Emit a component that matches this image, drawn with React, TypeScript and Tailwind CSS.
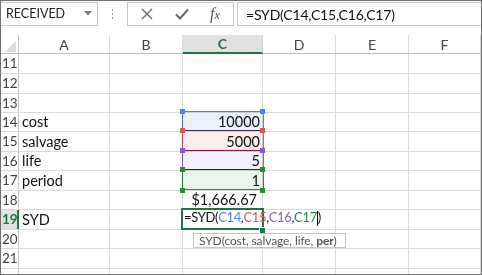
import { Fragment } from "react";

const COLS = [
  { key: "A", w: "w-[91px]" },
  { key: "B", w: "w-[73px]" },
  { key: "C", w: "w-[80px]" },
  { key: "D", w: "w-[73px]" },
  { key: "E", w: "w-[73px]" },
  { key: "F", w: "flex-1" },
];

const ROWS = [
  { n: 11, h: "h-[20px]" },
  { n: 12, h: "h-[20px]" },
  { n: 13, h: "h-[19px]" },
  { n: 14, h: "h-[19px]" },
  { n: 15, h: "h-[20px]" },
  { n: 16, h: "h-[19px]" },
  { n: 17, h: "h-[20px]" },
  { n: 18, h: "h-[19px]" },
  { n: 19, h: "h-[20px]" },
  { n: 20, h: "h-[19px]" },
  { n: 21, h: "h-[20px]" },
  { n: 22, h: "h-[20px]" },
];

const CELLS: Record<number, { A?: string; C?: string }> = {
  14: { A: "cost", C: "10000" },
  15: { A: "salvage", C: "5000" },
  16: { A: "life", C: "5" },
  17: { A: "period", C: "1" },
  18: { C: "$1,666.67" },
  19: { A: "SYD" },
};

// range finder boxes over C14:C17 (coords relative to the sheet frame)
const RANGES = [
  { top: "top-[110px]", h: "h-[20px]", border: "border-[#4f83e8]", fill: "bg-[#ebf1fd]", dot: "bg-[#4f83e8]", y1: "top-[108px]", y2: "top-[128px]" },
  { top: "top-[129px]", h: "h-[21px]", border: "border-[#e65353]", fill: "bg-[#fdecec]", dot: "bg-[#e65353]", y1: "top-[127px]", y2: "top-[148px]" },
  { top: "top-[149px]", h: "h-[20px]", border: "border-[#8b5bcf]", fill: "bg-[#f2eefa]", dot: "bg-[#8b5bcf]", y1: "top-[147px]", y2: "top-[167px]" },
  { top: "top-[168px]", h: "h-[21px]", border: "border-[#2b8a3a]", fill: "bg-[#e9f4ea]", dot: "bg-[#2b8a3a]", y1: "top-[166px]", y2: "top-[187px]" },
];

function Toolbar() {
  return (
    <div className="flex h-[34px] items-start pt-[1px]">
      <div className="flex h-[24px] w-[97px] items-center justify-between border-y border-r border-[#c6c6c6] pl-[5px] pr-[5px] text-[12.5px] text-[#222]">
        <span>RECEIVED</span>
        <svg width="8" height="5" viewBox="0 0 8 5" className="mb-[2px]">
          <path d="M0 0h8L4 4.5z" fill="#777" />
        </svg>
      </div>
      <div className="flex h-[24px] w-[29px] flex-col items-center justify-center gap-[2px]">
        <span className="h-[2px] w-[1px] bg-[#9a9a9a]" />
        <span className="h-[2px] w-[1px] bg-[#9a9a9a]" />
        <span className="h-[2px] w-[1px] bg-[#9a9a9a]" />
      </div>
      <div className="flex h-[24px] w-[107px] items-center border border-[#c6c6c6] pl-[13px]">
        <svg width="12" height="12" viewBox="0 0 12 12" className="mr-[22px]">
          <path d="M1 1l10 10M11 1L1 11" stroke="#6a6a6a" strokeWidth="1.4" />
        </svg>
        <svg width="14" height="12" viewBox="0 0 14 12" className="mr-[21px]">
          <path d="M1 6.5l4 4L13 1.5" stroke="#6a6a6a" strokeWidth="2" fill="none" />
        </svg>
        <span className="font-['Liberation_Serif',serif] text-[16px] italic leading-none text-[#555]">
          f<span className="text-[12px]">x</span>
        </span>
      </div>
      <div className="w-[3px]" />
      <div className="flex h-[24px] flex-1 items-center border-y border-l border-[#c6c6c6] pl-[8px] text-[14px] tracking-[-0.2px] text-[#111]">
        =SYD(C14,C15,C16,C17)
      </div>
    </div>
  );
}

function HeaderRow() {
  return (
    <div className="flex h-[19px] border-b border-[#bdbdbd]">
      <div className="flex w-[18px] items-end justify-end border-r border-[#c6c6c6] pb-[1px] pr-[2px]">
        <svg width="11" height="11" viewBox="0 0 11 11">
          <path d="M11 0v11H0z" fill="#dcdcdc" />
        </svg>
      </div>
      {COLS.map((c) =>
        c.key === "C" ? (
          <div
            key={c.key}
            className={`${c.w} -mb-px flex items-center justify-center border-b-2 border-r border-[#d4d4d4] border-b-[#217346] bg-[#e1e1e1] text-[14px] font-bold text-[#217346]`}
          >
            {c.key}
          </div>
        ) : (
          <div
            key={c.key}
            className={`${c.w} flex items-center justify-center border-r border-[#dadada] text-[14px] text-[#444]`}
          >
            {c.key}
          </div>
        ),
      )}
    </div>
  );
}

function Body() {
  return (
    <div>
      {ROWS.map((r) => {
        const data = CELLS[r.n] ?? {};
        const active = r.n === 19;
        return (
          <div key={r.n} className={`flex ${r.h} border-b border-[#dadada]`}>
            <div
              className={
                active
                  ? "flex w-[18px] items-center border-r-2 border-[#217346] bg-[#e1e1e1] pl-[1px] text-[13.5px] font-bold text-[#217346]"
                  : "flex w-[18px] items-center border-r border-[#c6c6c6] pl-[1px] text-[13.5px] text-[#444]"
              }
            >
              {r.n < 22 ? r.n : null}
            </div>
            {COLS.map((c) => (
              <div
                key={c.key}
                className={`${c.w} flex items-center overflow-hidden whitespace-nowrap border-r border-[#dadada] text-[14.5px] text-[#111] ${
                  c.key === "C" ? (r.n === 18 ? "justify-end pr-[5px]" : "justify-end pr-[2px]") : "pl-[3px]"
                }`}
              >
                {c.key === "A" ? data.A : c.key === "C" ? data.C : null}
              </div>
            ))}
          </div>
        );
      })}
    </div>
  );
}

export default function App() {
  return (
    <div className="relative h-[275px] w-[482px] overflow-hidden border border-[#707070] bg-white font-['Lato','Open_Sans',sans-serif]">
      <Toolbar />
      <HeaderRow />
      <Body />

      {/* range finder highlights */}
      {RANGES.map((r, i) => (
        <Fragment key={i}>
          <div className={`absolute left-[181px] ${r.top} ${r.h} w-[82px] border ${r.border} ${r.fill} mix-blend-multiply`} />
          <span className={`absolute left-[179px] ${r.y1} h-[5px] w-[5px] ${r.dot}`} />
          <span className={`absolute left-[259px] ${r.y1} h-[5px] w-[5px] ${r.dot}`} />
          {i === 3 && (
            <>
              <span className={`absolute left-[179px] ${r.y2} h-[5px] w-[5px] ${r.dot}`} />
              <span className={`absolute left-[259px] ${r.y2} h-[5px] w-[5px] ${r.dot}`} />
            </>
          )}
        </Fragment>
      ))}

      {/* active cell C19 */}
      <div className="absolute left-[180px] top-[207px] h-[22px] w-[83px] border-2 border-[#217346]" />
      <span className="absolute left-[259px] top-[227px] h-[5px] w-[5px] bg-[#217346] outline outline-1 outline-white" />
      <div className="absolute left-[183px] top-[207px] flex h-[20px] items-center whitespace-nowrap text-[13px] tracking-[-0.35px] text-[#111]">
        <span>=SYD(</span>
        <span className="text-[#4f83e8]">C14</span>
        <span>,</span>
        <span className="text-[#e65353]">C15</span>
        <span>,</span>
        <span className="text-[#8b5bcf]">C16</span>
        <span>,</span>
        <span className="text-[#2b8a3a]">C17</span>
        <span className="h-[15px] w-px bg-black" />
        <span>)</span>
      </div>

      {/* function tooltip */}
      <div className="absolute left-[192px] top-[232px] flex h-[15px] w-[153px] items-center whitespace-nowrap border border-[#c6c6c6] bg-white pl-[5px] text-[12px] tracking-[-0.1px] text-[#555]">
        SYD(cost, salvage, life,&nbsp;<b className="font-bold">per</b>)
      </div>
    </div>
  );
}
